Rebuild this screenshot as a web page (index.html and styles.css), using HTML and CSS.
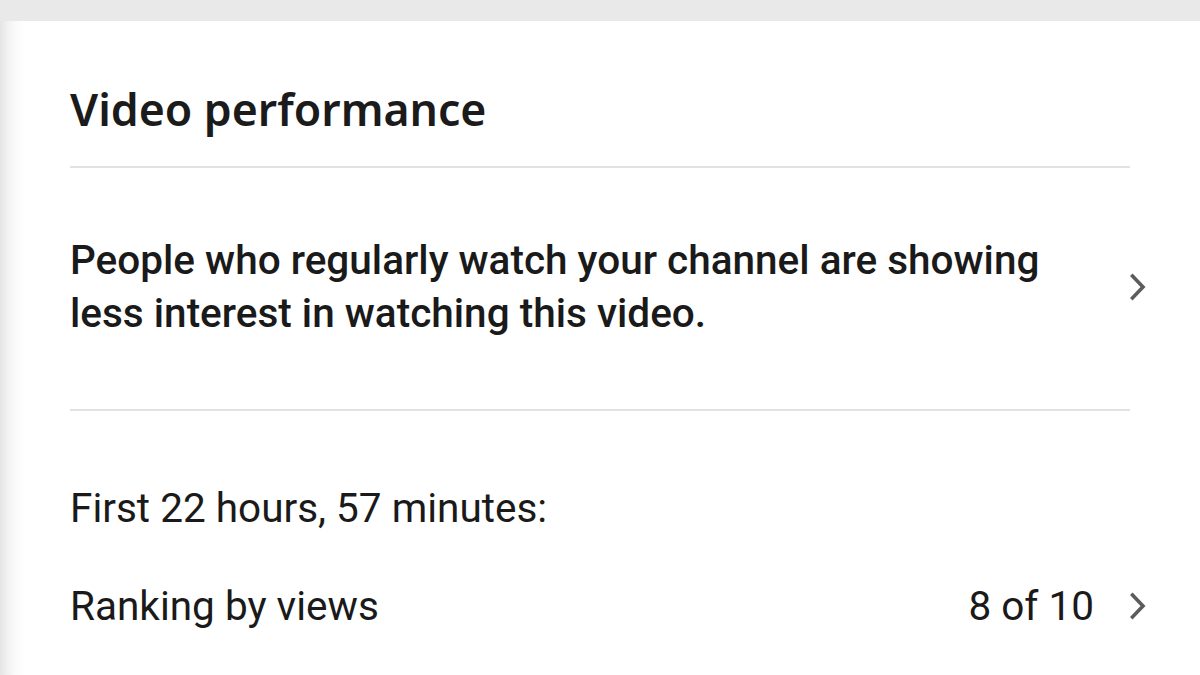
FILE: index.html
```html
<!DOCTYPE html>
<html lang="en">
<head>
<meta charset="utf-8">
<title>Video performance</title>
<link rel="stylesheet" href="styles.css">
</head>
<body>
<div class="topbar"></div>
<main class="card">
  <header class="card-header">
    <h1 class="title">Video performance</h1>
  </header>
  <div class="divider"></div>
  <section class="insight">
    <p class="insight-text">People who regularly watch your channel are showing less interest in watching this video.</p>
    <svg class="chevron" viewBox="0 0 16 28" aria-hidden="true"><path d="M2.5 3 L13 14 L2.5 25"/></svg>
  </section>
  <div class="divider"></div>
  <section class="stats">
    <p class="stats-period">First 22 hours, 57 minutes:</p>
    <div class="stat-row">
      <span class="stat-label">Ranking by views</span>
      <span class="stat-value">8 of 10</span>
      <svg class="chevron" viewBox="0 0 16 28" aria-hidden="true"><path d="M2.5 3 L13 14 L2.5 25"/></svg>
    </div>
  </section>
</main>
</body>
</html>
```

FILE: styles.css
```css
html, body {
  margin: 0;
  padding: 0;
  background: #ffffff;
  width: 1200px;
  height: 675px;
  overflow: hidden;
}

body {
  font-family: Roboto, "Liberation Sans", sans-serif;
  color: #1a1a1a;
}

.topbar {
  height: 21px;
  background: #e9e9e9;
}

.card {
  padding: 0 70px;
  height: 654px;
  background: linear-gradient(to right, #e4e4e4 0px, #f2f2f2 8px, #fbfbfb 16px, #ffffff 26px);
}

.card-header {
  padding-top: 58px;
  margin-bottom: 28px;
}

.title {
  margin: 0;
  font-family: "Noto Sans", "Open Sans", sans-serif;
  font-weight: 600;
  font-size: 44.6px;
  line-height: 59px;
  color: #1b1b1b;
}

.divider {
  height: 2px;
  background: #e2e2e2;
}

.insight {
  display: flex;
  align-items: center;
  justify-content: space-between;
  padding: 66px 0 69px;
}

.insight-text {
  margin: 0;
  width: 1000px;
  font-size: 40.5px;
  font-weight: 500;
  line-height: 53px;
  color: #1a1a1a;
}

.chevron {
  width: 16px;
  height: 28px;
  flex: none;
  margin-right: -16px;
}

.chevron path {
  fill: none;
  stroke: #5c5c5c;
  stroke-width: 3.6;
  stroke-linecap: square;
  stroke-linejoin: miter;
}

.stats {
  padding-top: 72px;
}

.stats-period {
  margin: 0;
  font-size: 40.5px;
  line-height: 50px;
}

.stat-row {
  display: flex;
  align-items: center;
  margin-top: 48px;
  font-size: 40.5px;
  line-height: 50px;
}

.stat-label {
  flex: 1;
}

.stat-value {
  margin-right: 36px;
}
```
